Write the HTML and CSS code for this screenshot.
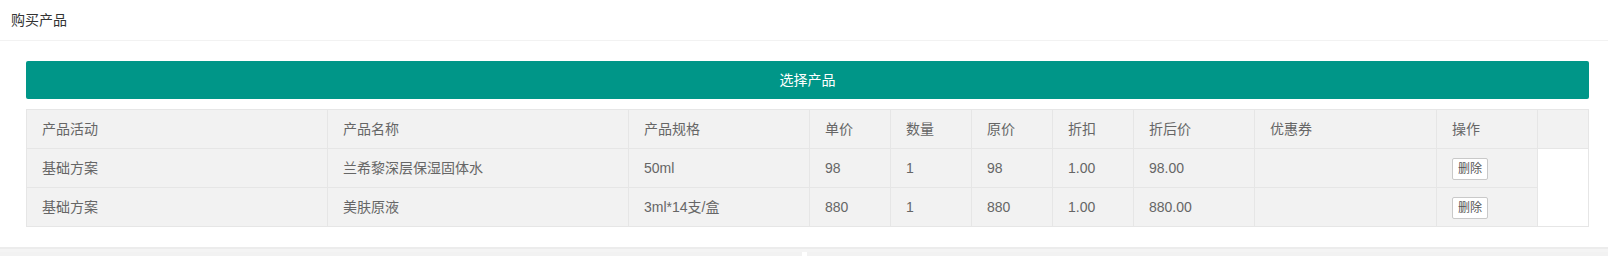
FILE: index.html
```html
<!DOCTYPE html>
<html lang="zh-CN">
<head>
<meta charset="utf-8">
<title>购买产品</title>
<link rel="stylesheet" href="styles.css">
</head>
<body>
<div class="card">
  <div class="card-header">购买产品</div>
  <div class="card-body">
    <button class="btn-select" type="button">选择产品</button>
    <div class="grid">
      <div class="cell th">产品活动</div>
      <div class="cell th">产品名称</div>
      <div class="cell th">产品规格</div>
      <div class="cell th">单价</div>
      <div class="cell th">数量</div>
      <div class="cell th">原价</div>
      <div class="cell th">折扣</div>
      <div class="cell th">折后价</div>
      <div class="cell th">优惠券</div>
      <div class="cell th">操作</div>
      <div class="cell th"></div>

      <div class="cell">基础方案</div>
      <div class="cell">兰希黎深层保湿固体水</div>
      <div class="cell">50ml</div>
      <div class="cell">98</div>
      <div class="cell">1</div>
      <div class="cell">98</div>
      <div class="cell">1.00</div>
      <div class="cell">98.00</div>
      <div class="cell"></div>
      <div class="cell"><button class="btn-del" type="button">删除</button></div>
      <div class="cell blank"></div>

      <div class="cell">基础方案</div>
      <div class="cell">美肤原液</div>
      <div class="cell">3ml*14支/盒</div>
      <div class="cell">880</div>
      <div class="cell">1</div>
      <div class="cell">880</div>
      <div class="cell">1.00</div>
      <div class="cell">880.00</div>
      <div class="cell"></div>
      <div class="cell"><button class="btn-del" type="button">删除</button></div>
    </div>
  </div>
</div>
<div class="below">
  <div class="below-panel"></div>
  <div class="below-panel"></div>
</div>
</body>
</html>
```

FILE: styles.css
```css
* { box-sizing: border-box; }
html, body {
  margin: 0;
  padding: 0;
  background: #fff;
  font-family: "Liberation Sans", "Noto Sans CJK SC", sans-serif;
  font-size: 14px;
  color: #666;
}
.card-header {
  height: 41px;
  line-height: 40px;
  padding-left: 11px;
  color: #333;
  font-size: 14px;
  border-bottom: 1px solid #f2f2f2;
}
.card-body {
  padding: 20px 19px 0 26px;
}
.btn-select {
  display: block;
  width: 1563px;
  height: 38px;
  line-height: 38px;
  border: 0;
  border-radius: 2px;
  background: #009688;
  color: #fff;
  font-family: inherit;
  font-size: 14px;
  padding: 0;
  cursor: pointer;
}
.grid {
  margin-top: 10px;
  width: 1563px;
  display: grid;
  grid-template-columns: 301px 301px 181px 81px 81px 81px 81px 121px 182px 101px 51px;
  grid-template-rows: repeat(3, 39px);
  border-top: 1px solid #e6e6e6;
  border-left: 1px solid #e6e6e6;
  background: #fff;
}
.cell {
  background: #f2f2f2;
  border-right: 1px solid #e6e6e6;
  border-bottom: 1px solid #e6e6e6;
  padding: 9px 15px 0;
  line-height: 20px;
  font-size: 14px;
  color: #666;
  white-space: nowrap;
}
.cell.blank {
  grid-column: 11;
  grid-row: 2 / span 2;
  background: #fff;
}
.btn-del {
  display: inline-block;
  vertical-align: top;
  height: 22px;
  line-height: 20px;
  padding: 0 5px;
  border: 1px solid #c9c9c9;
  border-radius: 2px;
  background: #fff;
  color: #555;
  font-family: inherit;
  font-size: 12px;
  cursor: pointer;
}
.below {
  margin-top: 20px;
  height: 9px;
  border-top: 2px solid #ececec;
  background: #f4f4f4;
  display: flex;
  gap: 5px;
  padding-top: 3px;
}
.below-panel {
  flex: 1;
  background: #f2f2f2;
}
.below-panel + .below-panel {
  box-shadow: -5px 0 0 #fff;
}
```
